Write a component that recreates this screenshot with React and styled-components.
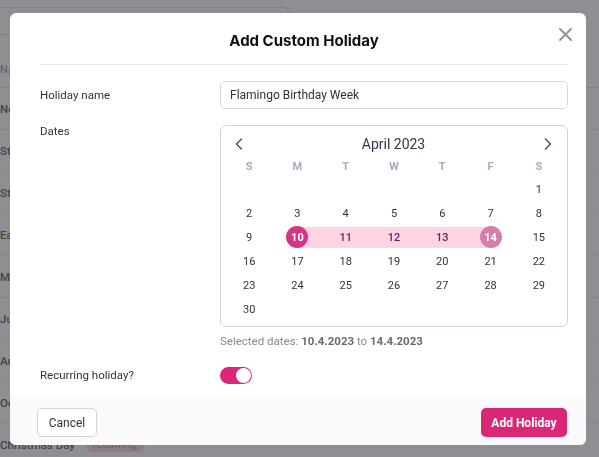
import React from 'react'
import styled, { createGlobalStyle } from 'styled-components'

const GlobalStyle = createGlobalStyle`
  html, body {
    margin: 0;
    padding: 0;
  }
  body {
    font-family: Roboto, "Noto Sans", sans-serif;
    background: #ffffff;
    color: #333333;
  }
  * {
    box-sizing: border-box;
  }
`

const holidays = [
    "New Year's Day",
    "St. Valentine's Day",
    "St. Patrick's Day",
    "Easter Monday",
    "May Day",
    "Juneteenth",
    "August Bank Holiday",
    "October Holiday",
]

const weekDays = ['S', 'M', 'T', 'W', 'T', 'F', 'S']

const days = [null, null, null, null, null, null, ...Array.from({ length: 30 }, (_, i) => i + 1)]

function rangeOf(day) {
    if (day === 10) return 'start'
    if (day === 14) return 'end'
    if (day > 10 && day < 14) return 'mid'
    return 'none'
}

function Chevron({ dir }) {
    return (
        <svg width="8" height="12" viewBox="0 0 8 12">
            <polyline
                points={dir === 'left' ? '6.5,1 1.5,6 6.5,11' : '1.5,1 6.5,6 1.5,11'}
                fill="none"
                stroke="#4a5568"
                strokeWidth="1.5"
                strokeLinecap="round"
                strokeLinejoin="round"
            />
        </svg>
    )
}

export default function App() {
    return (
        <>
            <GlobalStyle />
            <Page>
                <SearchBox />
                <Table>
                    <HeadRow>Name</HeadRow>
                    {holidays.map(name => (
                        <Row key={name}>{name}</Row>
                    ))}
                    <Row>
                        Christmas Day <Badge>recurring</Badge>
                    </Row>
                </Table>

                <Overlay>
                    <Modal>
                        <Header>Add Custom Holiday</Header>
                        <Close aria-label="Close">
                            <svg width="13" height="13" viewBox="0 0 13 13">
                                <path d="M1 1 L12 12 M12 1 L1 12" stroke="#8d8f95" strokeWidth="1.8" strokeLinecap="round" />
                            </svg>
                        </Close>

                        <Body>
                            <FieldRow $center>
                                <Label>Holiday name</Label>
                                <Input defaultValue="Flamingo Birthday Week" />
                            </FieldRow>

                            <FieldRow>
                                <Label>Dates</Label>
                                <div>
                                    <Calendar>
                                        <CalHeader>
                                            <NavButton><Chevron dir="left" /></NavButton>
                                            <Month>April 2023</Month>
                                            <NavButton><Chevron dir="right" /></NavButton>
                                        </CalHeader>
                                        <Grid>
                                            {weekDays.map((d, i) => (
                                                <WeekDay key={i}>{d}</WeekDay>
                                            ))}
                                            {days.map((d, i) => {
                                                const range = d ? rangeOf(d) : 'none'
                                                return (
                                                    <Day key={i}>
                                                        <Band $range={range}>
                                                            {range === 'start' && <Circle $color="#d63384">{d}</Circle>}
                                                            {range === 'end' && <Circle $color="#d67dab">{d}</Circle>}
                                                            {(range === 'mid' || range === 'none') && (
                                                                <DayNumber $inRange={range === 'mid'}>{d}</DayNumber>
                                                            )}
                                                        </Band>
                                                    </Day>
                                                )
                                            })}
                                        </Grid>
                                    </Calendar>
                                    <Selected>
                                        Selected dates: <b>10.4.2023</b> to <b>14.4.2023</b>
                                    </Selected>
                                </div>
                            </FieldRow>

                            <FieldRow $center $gap>
                                <Label>Recurring holiday?</Label>
                                <Toggle>
                                    <Knob />
                                </Toggle>
                            </FieldRow>
                        </Body>

                        <Footer>
                            <CancelButton>Cancel</CancelButton>
                            <AddButton>Add Holiday</AddButton>
                        </Footer>
                    </Modal>
                </Overlay>
            </Page>
        </>
    )
}

const Page = styled.div`
    position: relative;
    width: 599px;
    height: 457px;
    overflow: hidden;
`

const SearchBox = styled.div`
    margin: 7px 0 0 -20px;
    width: 310px;
    height: 28px;
    border: 1px solid #e2e2e2;
    border-radius: 6px;
`

const Table = styled.div`
    margin-top: 14px;
`

const HeadRow = styled.div`
    height: 39px;
    display: flex;
    align-items: center;
    font-size: 11px;
    text-transform: uppercase;
    letter-spacing: 0.5px;
    color: #9a9a9a;
    border-bottom: 1px solid #e5e7eb;
    padding-top: 2px;
`

const Row = styled.div`
    height: 42px;
    display: flex;
    align-items: center;
    gap: 10px;
    font-size: 11.5px;
    font-weight: 500;
    color: #6a6a6a;
    border-bottom: 1px solid #f0f0f0;
`

const Badge = styled.span`
    font-size: 11px;
    color: #e78ab3;
    background: #f7dbe8;
    padding: 1px 8px;
    border-radius: 8px;
    font-weight: 400;
`

const Overlay = styled.div`
    position: fixed;
    inset: 0;
    background: rgba(30, 30, 40, 0.5);
    padding: 13px 0 0 10px;
`

const Modal = styled.div`
    position: relative;
    width: 576px;
    height: 432px;
    background: #ffffff;
    border-radius: 6px;
    display: flex;
    flex-direction: column;
    overflow: hidden;
`

const Header = styled.div`
    margin: 0 18px 0 30px;
    padding: 18px 0 14px;
    border-bottom: 1px solid #e5e5e5;
    text-align: center;
    font-family: Inter, "Noto Sans", sans-serif;
    font-size: 15px;
    line-height: 19px;
    font-weight: 700;
    color: #111;
`

const Close = styled.div`
    position: absolute;
    top: 15px;
    right: 14px;
    display: flex;
    cursor: pointer;
`

const Body = styled.div`
    padding: 16px 18px 0 30px;
    display: flex;
    flex-direction: column;
    gap: 16px;
`

const FieldRow = styled.div`
    display: grid;
    grid-template-columns: 180px 1fr;
    align-items: ${props => (props.$center ? 'center' : 'start')};
    margin-top: ${props => (props.$gap ? '2px' : '0')};
`

const Label = styled.div`
    font-size: 11.5px;
    line-height: 14px;
    color: #333;
    margin-top: -1px;
`

const Input = styled.input`
    height: 28px;
    width: 100%;
    border: 1px solid #d9d9d9;
    border-radius: 5px;
    padding: 0 9px;
    font-family: Roboto, "Noto Sans", sans-serif;
    font-size: 12px;
    color: #333;
    outline: none;
`

const Calendar = styled.div`
    border: 1px solid #cbd5e1;
    border-radius: 6px;
    padding: 7px 4px 5px;
`

const CalHeader = styled.div`
    height: 22px;
    display: flex;
    align-items: center;
    justify-content: space-between;
    padding: 0 11px 0 10px;
`

const NavButton = styled.div`
    display: flex;
    cursor: pointer;
`

const Month = styled.div`
    font-size: 14px;
    font-weight: 400;
    color: #2d3748;
`

const Grid = styled.div`
    display: grid;
    grid-template-columns: repeat(7, 1fr);
`

const WeekDay = styled.div`
    height: 22px;
    display: flex;
    align-items: center;
    justify-content: center;
    font-size: 11px;
    font-weight: 700;
    color: #a0aec0;
`

const Day = styled.div`
    height: 24px;
    display: flex;
    align-items: center;
`

const bandColor = '#fdd5e2'

const Band = styled.div`
    width: 100%;
    height: 21px;
    display: flex;
    align-items: center;
    justify-content: center;
    background: ${props =>
        props.$range === 'mid'
            ? bandColor
            : props.$range === 'start'
                ? `linear-gradient(to right, transparent 50%, ${bandColor} 50%)`
                : props.$range === 'end'
                    ? `linear-gradient(to right, ${bandColor} 50%, transparent 50%)`
                    : 'transparent'};
`

const DayNumber = styled.span`
    font-size: 11px;
    color: ${props => (props.$inRange ? '#6b2150' : '#333')};
    font-weight: ${props => (props.$inRange ? 500 : 400)};
`

const Circle = styled.span`
    width: 22px;
    height: 22px;
    border-radius: 50%;
    background: ${props => props.$color};
    color: #fff;
    font-size: 11px;
    font-weight: 700;
    display: flex;
    align-items: center;
    justify-content: center;
`

const Selected = styled.div`
    margin-top: 6px;
    font-size: 11.5px;
    line-height: 16px;
    color: #8a8a8a;
    b {
        color: #6b6b6b;
        font-weight: 700;
    }
`

const Toggle = styled.div`
    width: 32px;
    height: 17px;
    border-radius: 9px;
    background: #db2777;
    display: flex;
    align-items: center;
    justify-content: flex-end;
    padding: 1px;
    cursor: pointer;
`

const Knob = styled.div`
    width: 15px;
    height: 15px;
    border-radius: 50%;
    background: #fff;
`

const Footer = styled.div`
    margin-top: auto;
    height: 47px;
    background: #fafafa;
    display: flex;
    align-items: flex-start;
    justify-content: space-between;
    padding: 10px 19px 0 27px;
`

const CancelButton = styled.button`
    height: 29px;
    width: 60px;
    background: #fff;
    border: 1px solid #d4d4d4;
    border-radius: 5px;
    font-family: Roboto, "Noto Sans", sans-serif;
    font-size: 12px;
    color: #333;
    cursor: pointer;
`

const AddButton = styled.button`
    height: 29px;
    width: 86px;
    background: #db2777;
    border: none;
    border-radius: 5px;
    font-family: Roboto, "Noto Sans", sans-serif;
    font-size: 12px;
    font-weight: 700;
    color: #fff;
    cursor: pointer;
`
